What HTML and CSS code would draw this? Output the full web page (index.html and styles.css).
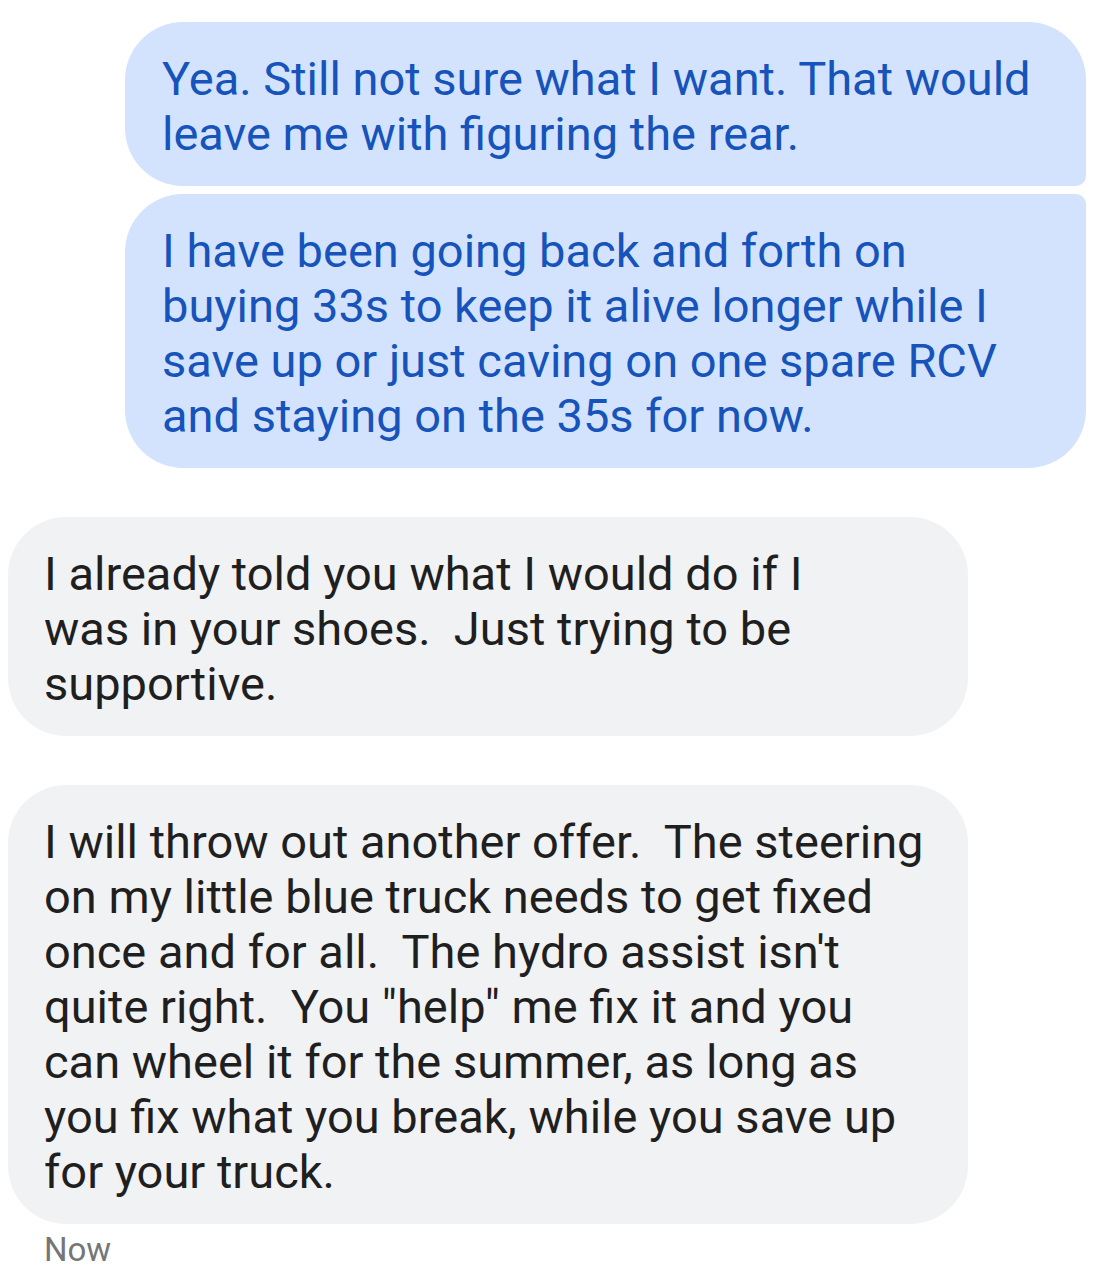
FILE: index.html
```html
<!DOCTYPE html>
<html lang="en">
<head>
    <meta charset="UTF-8">
    <title>Messages</title>
    <link rel="stylesheet" href="styles.css">
</head>
<body>

<div class="thread">
    <div class="group sent">
        <div class="bubble first">Yea. Still not sure what I want. That would<br>leave me with figuring the rear.</div>
        <div class="bubble last">I have been going back and forth on<br>buying 33s to keep it alive longer while I<br>save up or just caving on one spare RCV<br>and staying on the 35s for now.</div>
    </div>

    <div class="group received">
        <div class="bubble">I already told you what I would do if I<br>was in your shoes.&nbsp; Just trying to be<br>supportive.</div>
    </div>

    <div class="group received">
        <div class="bubble">I will throw out another offer.&nbsp; The steering<br>on my little blue truck needs to get fixed<br>once and for all.&nbsp; The hydro assist isn't<br>quite right.&nbsp; You "help" me fix it and you<br>can wheel it for the summer, as long as<br>you fix what you break, while you save up<br>for your truck.</div>
        <div class="time">Now</div>
    </div>
</div>

</body>
</html>
```

FILE: styles.css
```css
body {
    margin: 0;
    background-color: #fff;
    font-family: Roboto, "Liberation Sans", sans-serif;
}
.thread {
    display: flex;
    flex-direction: column;
    gap: 49px;
    padding: 22px 24px 0 8px;
}
.group {
    display: flex;
    flex-direction: column;
    gap: 8px;
}
.sent {
    align-items: flex-end;
}
.received {
    align-items: flex-start;
    gap: 0;
}
.bubble {
    box-sizing: border-box;
    font-size: 47px;
    line-height: 55px;
    padding: 29px 36px 25px 37px;
    border-radius: 58px;
    white-space: nowrap;
}
.sent .bubble {
    width: 961px;
    background-color: #d3e3fd;
    color: #1653bb;
}
.sent .first {
    border-bottom-right-radius: 10px;
}
.sent .last {
    border-top-right-radius: 10px;
}
.received .bubble {
    width: 960px;
    background-color: #f1f2f4;
    color: #1f1f1f;
    padding-left: 36px;
}
.time {
    font-size: 33px;
    color: #747775;
    padding: 6px 0 0 36px;
}
```
